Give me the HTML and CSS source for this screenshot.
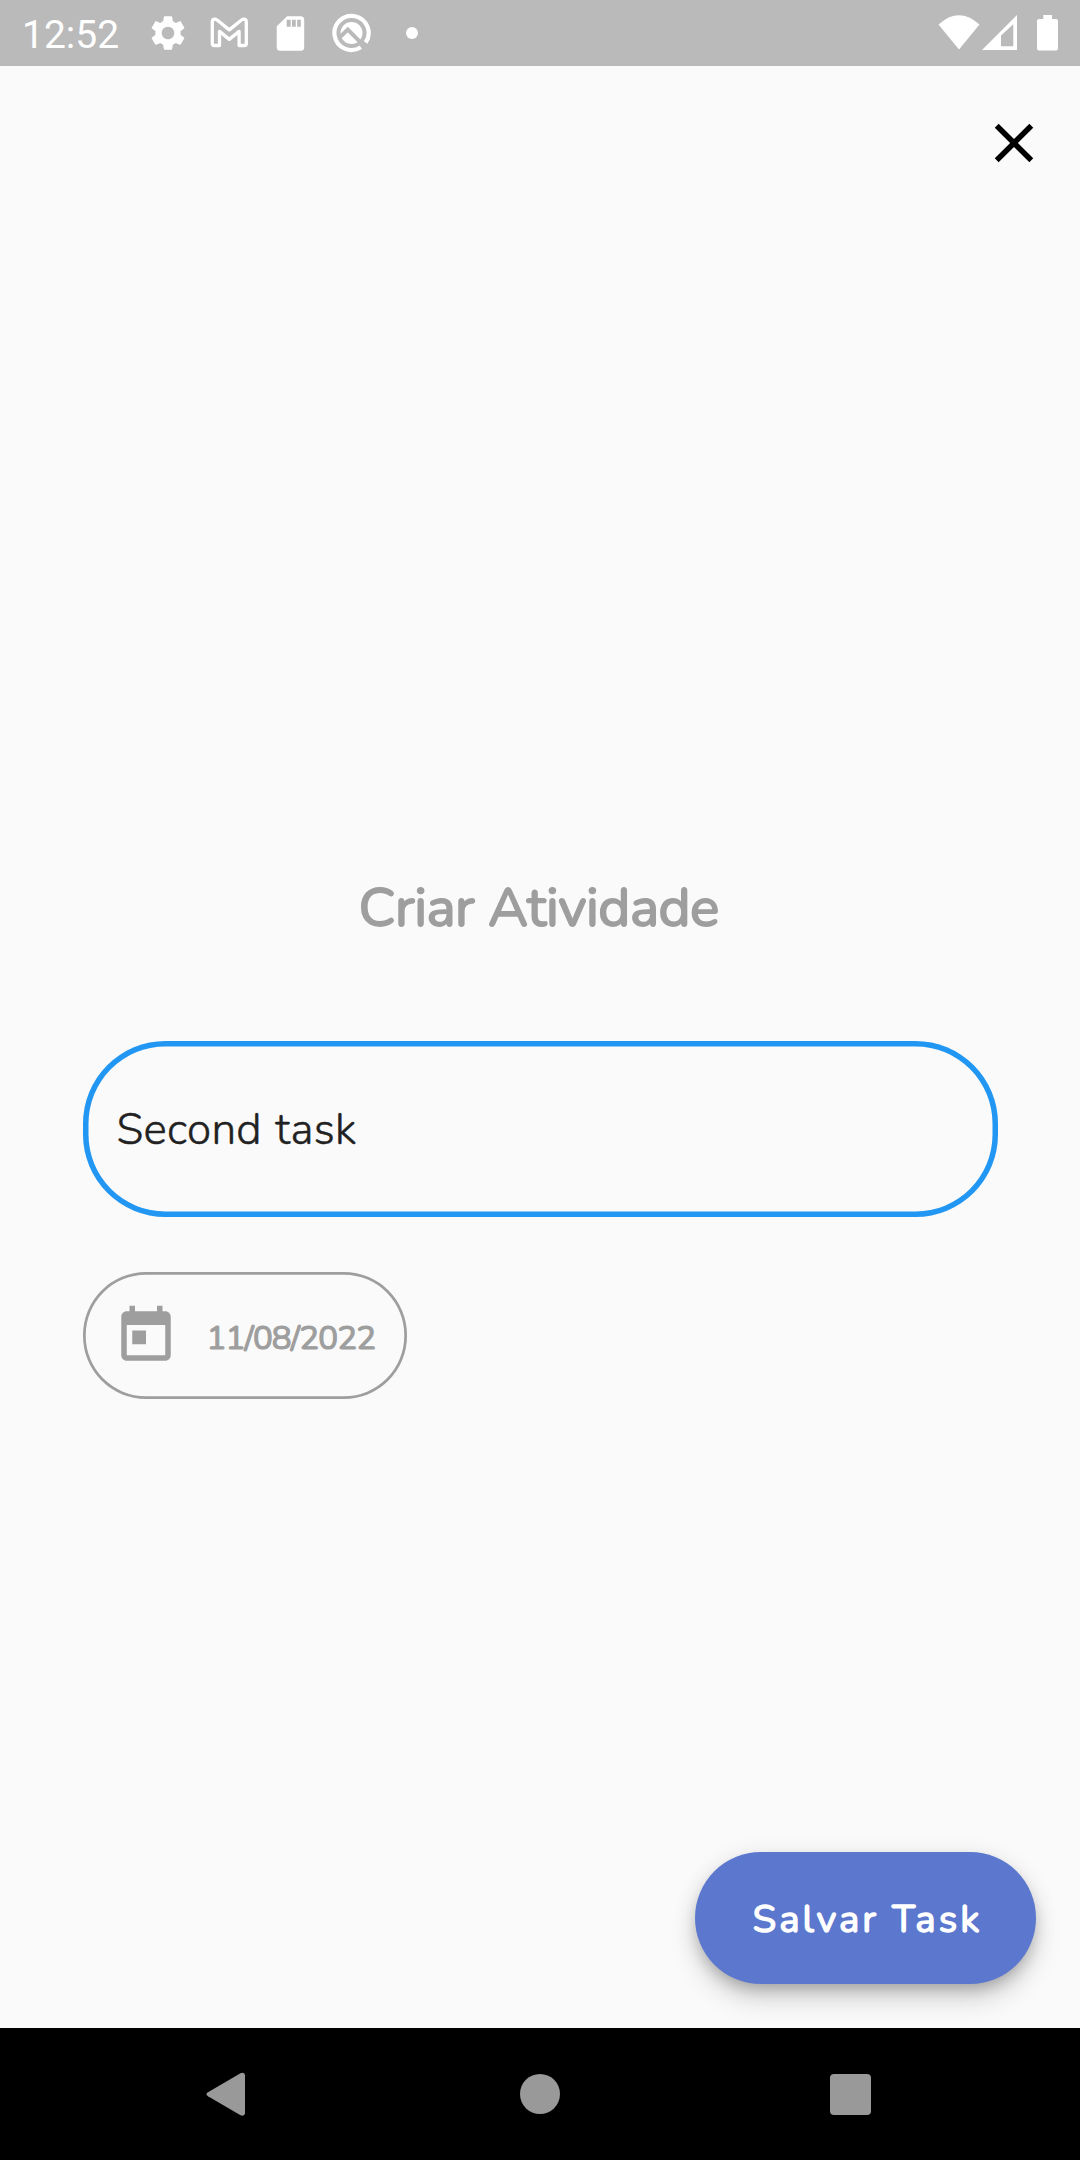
FILE: index.html
```html
<!DOCTYPE html>
<html lang="pt-BR">
<head>
<meta charset="utf-8">
<title>Criar Atividade</title>
<link rel="stylesheet" href="styles.css">
</head>
<body>
<div class="screen">
  <header class="status">
    <span class="clock">12:52</span>
    <div class="notifications">
      <svg class="icon" viewBox="0 0 24 24"><path d="M19.14 12.94c.04-.3.06-.61.06-.94 0-.32-.02-.64-.07-.94l2.03-1.58c.18-.14.23-.41.12-.61l-1.92-3.32c-.12-.22-.37-.29-.59-.22l-2.39.96c-.5-.38-1.03-.7-1.62-.94l-.36-2.54c-.04-.24-.24-.41-.48-.41h-3.84c-.24 0-.43.17-.47.41l-.36 2.54c-.59.24-1.13.57-1.62.94l-2.39-.96c-.22-.08-.47 0-.59.22L2.74 8.87c-.12.21-.08.47.12.61l2.03 1.58c-.05.3-.09.63-.09.94s.02.64.07.94l-2.03 1.58c-.18.14-.23.41-.12.61l1.92 3.32c.12.22.37.29.59.22l2.39-.96c.5.38 1.03.7 1.62.94l.36 2.54c.05.24.24.41.48.41h3.84c.24 0 .44-.17.47-.41l.36-2.54c.59-.24 1.13-.56 1.62-.94l2.39.96c.22.08.47 0 .59-.22l1.92-3.32c.12-.22.07-.47-.12-.61l-2.01-1.58zM12 15.6c-1.98 0-3.6-1.62-3.6-3.6s1.62-3.6 3.6-3.6 3.6 1.62 3.6 3.6-1.62 3.6-3.6 3.6z"/></svg>
      <svg class="icon outline" viewBox="0 0 42 42"><path d="M4 35.200V13.500Q4 10.700 6.500 10.700Q7.700 10.700 8.800 11.500L21 21.400L33.200 11.500Q34.300 10.700 35.500 10.700Q38 10.700 38 13.500V35.200Q38 37 36.200 37H30.800V22.900L21 30.900L11.200 22.900V37H5.800Q4 37 4 35.200Z" transform="translate(.300 -3.500)"/></svg>
      <svg class="icon" viewBox="0 0 42 42"><path transform="translate(1.200 0)" fill-rule="evenodd" d="M17 4.200H30.500Q34 4.200 34 7.700V35.200Q34 38.700 30.500 38.700H10Q6.500 38.700 6.500 35.200V14.200ZM16.500 7.700V14.700H20.500V7.700ZM21.800 7.700V14.700H25.600V7.700ZM27 7.700V14.700H30.600V7.700Z"/></svg>
      <svg class="icon" viewBox="0 0 42 42"><g transform="translate(.500 0)"><circle cx="21" cy="21" r="11"/><path class="notch" d="M8.500 26L17.300 17.600L34 34.300"/><path class="ring" d="M30.300 35.300A17.100 17.100 0 1 1 35.200 30.500"/></g></svg>
      <i class="dot"></i>
    </div>
    <div class="system">
      <svg class="wifi" viewBox="0 0 42 36"><path d="M0.500 9.500Q21-9 41.500 9.500L21 34.500Z"/></svg>
      <svg class="signal" viewBox="0 0 36 36"><path fill-rule="evenodd" d="M35 0V35H0ZM31.300 9.300L19 20.500V31.300H31.300Z"/></svg>
      <svg class="battery" viewBox="0 0 21 36"><path d="M6.300 0H15V4H19Q21 4 21 6V33.500Q21 35.500 19 35.500H2Q0 35.500 0 33.500V6Q0 4 2 4H6.300Z"/></svg>
    </div>
  </header>
  <main class="page">
    <button class="close" aria-label="Fechar"><svg viewBox="0 0 24 24"><path d="M19 6.410 17.590 5 12 10.590 6.410 5 5 6.410 10.590 12 5 17.590 6.410 19 12 13.410 17.590 19 19 17.590 13.410 12z"/></svg></button>
    <h1 class="title">Criar Atividade</h1>
    <div class="field"><span class="field-text">Second task</span></div>
    <button class="date">
      <svg class="calendar" viewBox="0 0 24 24"><path d="M19 3h-1V1h-2v2H8V1H6v2H5c-1.110 0-1.990.9-1.990 2L3 19c0 1.100.89 2 2 2h14c1.100 0 2-.9 2-2V5c0-1.100-.9-2-2-2zm0 16H5V8h14v11zM7 10h5v5H7z"/></svg>
      <span class="date-text">11/08/2022</span>
    </button>
    <button class="save"><span class="save-text">Salvar Task</span></button>
  </main>
  <nav class="nav">
    <svg viewBox="0 0 44 50"><path d="M2 22.300L34.500 3.300Q38.500 1.800 39 5.300V43.300Q38.500 46.800 34.500 45.300L2 26.300Q-1 24.300 2 22.300Z"/></svg>
    <svg viewBox="0 0 44 50"><circle cx="22" cy="24" r="20"/></svg>
    <svg viewBox="0 0 44 50"><rect y="4" width="41" height="41" rx="4"/></svg>
  </nav>
</div>
</body>
</html>
```
FILE: styles.css
```css
* { box-sizing: border-box; }
body { margin: 0; }
button { border: 0; padding: 0; background: none; color: inherit; font: inherit; }
svg { display: block; flex: none; }
.screen {
  width: 1080px;
  height: 2160px;
  display: flex;
  flex-direction: column;
  background: #fafafa;
  font-family: Nunito, Lato, "Open Sans", sans-serif;
}
.status {
  height: 66px;
  display: flex;
  align-items: flex-start;
  background: #bababa;
  color: #fff;
  fill: #fff;
  padding: 0 22px;
}
.clock { width: 125px; margin-top: 12px; font: 39px/46px Roboto, sans-serif; }
.notifications { display: flex; gap: 19px; margin-top: 12px; }
.icon { width: 42px; height: 42px; }
.outline { fill: none; stroke: #fff; stroke-width: 3.3; stroke-linejoin: round; }
.ring { fill: none; stroke: #fff; stroke-width: 4.2; }
.notch { fill: none; stroke: #bababa; stroke-width: 4; }
.dot { width: 12px; height: 12px; margin: 15px 0 0 15px; border-radius: 50%; background: #fff; }
.system { display: flex; margin-left: auto; margin-top: 15px; }
.wifi { width: 42px; height: 36px; }
.signal { width: 36px; height: 36px; margin-left: 2px; }
.battery { width: 21px; height: 36px; margin-left: 19px; }
.page { flex: 1; display: flex; flex-direction: column; align-items: flex-start; padding: 44px 44px 44px 82.500px; }
.close { align-self: flex-end; margin-right: -11px; }
.close svg { width: 66px; height: 66px; }
.title {
  margin: 697px 0 0 276px;
  font-size: 55px;
  line-height: 70px;
  font-weight: 400;
  letter-spacing: -.500px;
  -webkit-text-stroke: 1.800px;
  white-space: nowrap;
  color: #9e9e9e;
}
.field {
  width: 915px;
  height: 176px;
  margin-top: 98px;
  padding: 1px 34px 0;
  display: flex;
  align-items: center;
  border-radius: 82.500px;
  box-shadow: inset 0 0 0 5.500px #2196f3;
  color: #212121;
}
.field-text {
  font-size: 44px;
  font-weight: 300;
  letter-spacing: .300px;
  word-spacing: 2px;
  line-height: 60px;
  -webkit-text-stroke: .500px;
  white-space: nowrap;
}
.date {
  width: 324.500px;
  height: 126.500px;
  margin-top: 55px;
  padding-left: 30px;
  display: flex;
  align-items: center;
  border-radius: 63px;
  box-shadow: inset 0 0 0 2.750px #9e9e9e;
  color: #9e9e9e;
  fill: #9e9e9e;
}
.calendar { width: 66px; height: 66px; margin-top: 1px; }
.date-text { margin: 7px 0 0 28px; font-size: 33px; letter-spacing: -.850px; -webkit-text-stroke: 1.200px; white-space: nowrap; }
.save {
  width: 341px;
  height: 132px;
  margin-top: auto;
  padding: 2px 0 0 4px;
  align-self: flex-end;
  border-radius: 66px;
  background: #5c77ce;
  box-shadow: 0 8px 14px -3px rgba(0,0,0,.2), 0 16px 27px rgba(0,0,0,.14), 0 3px 24px rgba(0,0,0,.08);
  color: #fff;
}
.save-text { font-size: 38.500px; letter-spacing: 3px; -webkit-text-stroke: 1.400px; white-space: nowrap; }
.nav { height: 132px; display: flex; align-items: flex-start; gap: 268px; padding: 42px 0 0 206px; background: #000; fill: #999; }
.nav svg { width: 44px; height: 50px; }
```
